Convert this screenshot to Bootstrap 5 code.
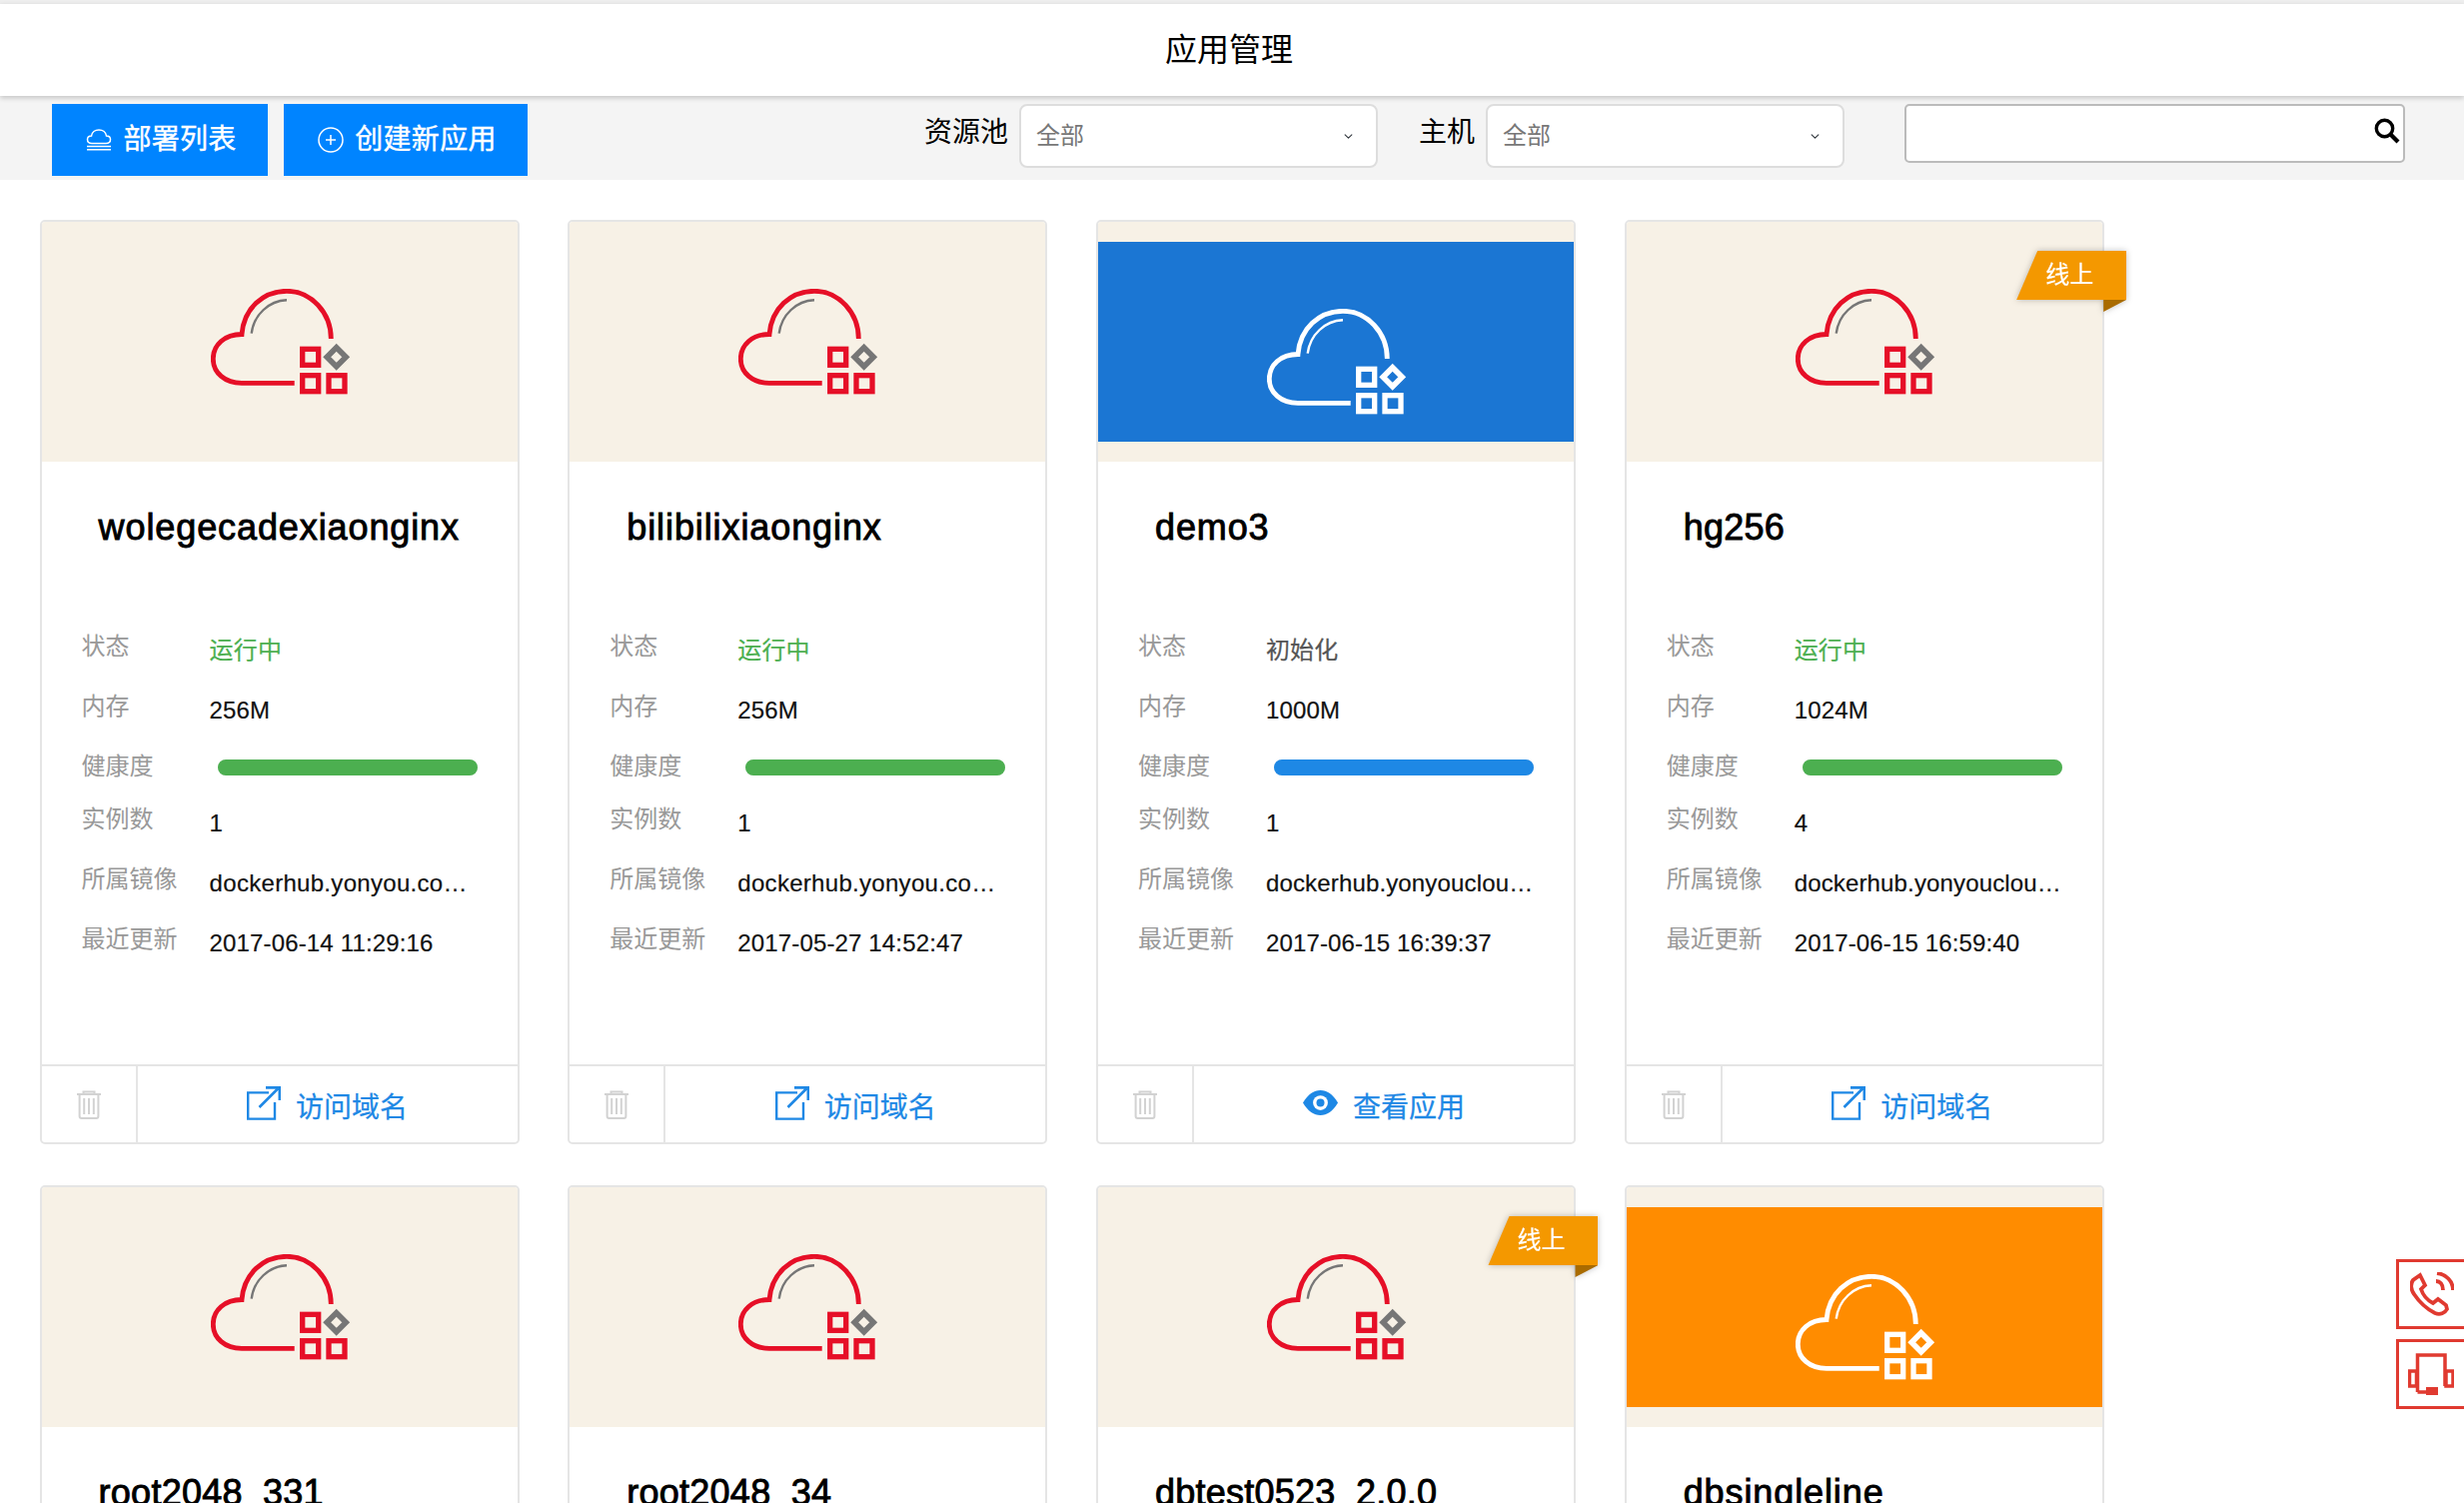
<!DOCTYPE html>
<html lang="zh-CN">
<head>
  <meta charset="UTF-8" />
  <title>应用管理</title>
  <meta name="viewport" content="width=device-width, initial-scale=1" />
  <link href="https://cdn.jsdelivr.net/npm/bootstrap@5.3.0/dist/css/bootstrap.min.css" rel="stylesheet" />
  <style>
    html, body {
      height: 100%;
      overflow: hidden;
    }
    body {
      font-family: "Liberation Sans", "Noto Sans CJK SC", sans-serif;
      background: #fff;
      color: #000;
    }
    .top-strip {
      height: 4px;
      background: #eee;
    }
    .page-head {
      height: 92px;
      padding-right: 6px;
      background: #fff;
      font-size: 32px;
      line-height: 93px;
      position: relative;
      z-index: 2;
      box-shadow: 0 2px 5px rgba(0, 0, 0, .2);
    }
    .tool-bar {
      height: 84px;
      padding: 8px 59px 0 52px;
      background: #f4f4f4;
    }
    .tool-btn {
      height: 72px;
      padding: 0 0 0 3px;
      border: 0;
      border-radius: 0;
      background: #0084ff;
      color: #fff;
      font-size: 28px;
      line-height: 1;
      letter-spacing: .3px;
      -webkit-text-stroke: .4px #fff;
    }
    .tool-btn:hover {
      background: #0074e0;
      color: #fff;
    }
    .tool-btn svg { margin-right: 11px; }
    .btn-list { width: 216px; }
    .btn-new { width: 244px; margin-left: 16px; }
    .tool-label {
      font-size: 28px;
      line-height: 58px;
      margin-right: 11px;
    }
    .tool-select {
      width: 359px;
      height: 64px;
      padding: 0 40px 0 15px;
      font-size: 24px;
      color: #777;
      border: 2px solid #ddd;
      border-radius: 8px;
      background-size: 11px 9px;
      background-position: right 22px center;
      margin-right: 41px;
    }
    .tool-search {
      width: 501px;
      height: 59px;
      margin-left: 19px;
      position: relative;
    }
    .tool-search input {
      height: 59px;
      border: 2px solid #bbb;
      border-radius: 5px;
    }
    .tool-search svg {
      position: absolute;
      top: 14px;
      right: 5px;
    }
    .card-wall {
      padding: 40px 0 0 39.6px;
      column-gap: 48.7px;
      row-gap: 41px;
    }
    .app-card {
      width: 480px;
      height: 925px;
      border: 2px solid #e5e5e5;
      border-radius: 5px;
      background: #fff;
      flex: none;
    }
    .app-pic {
      height: 240px;
      padding: 67px 0 0 169px;
      background: #f7f1e6;
      border-radius: 3px 3px 0 0;
    }
    .pic-red { color: #e60f27; --cloud-two: #767676; }
    .pic-fill { padding: 20px 0; color: #fff; --cloud-two: #fff; }
    .pic-fill > div { height: 200px; padding: 67px 0 0 169px; }
    .fill-blue { background: #1b76d3; }
    .fill-orange { background: #ff8c00; }
    .app-title {
      margin: 41px 0 64px 57px;
      font-size: 36px;
      line-height: 50px;
      font-weight: 400;
      letter-spacing: .9px;
      -webkit-text-stroke: .9px #000;
    }
    .title-num { letter-spacing: .25px; }
    .info-row {
      height: 60px;
      margin-left: 40px;
      font-size: 24px;
    }
    .info-key {
      width: 128px;
      flex: none;
      line-height: 60px;
      color: #999;
    }
    .info-val {
      line-height: 68px;
      color: #111;
      white-space: nowrap;
      letter-spacing: .15px;
      -webkit-text-stroke: .2px currentColor;
    }
    .val-long { letter-spacing: .3px; }
    .val-run { color: #4caf50; }
    .val-init { color: #555; }
    .row-health { height: 52.5px; }
    .health-bar {
      width: 260px;
      height: 16px;
      margin: 23px 0 0 8px;
      border-radius: 8px;
      background: #e9e9e9;
    }
    .bar-green { background: #4caf50; }
    .bar-blue { background: #1e88e5; }
    .app-foot {
      height: 78px;
      padding: 0;
      border-top: 2px solid #e5e5e5;
      border-radius: 0;
      background: #fff;
    }
    .foot-del {
      width: 96px;
      border-right: 2px solid #e5e5e5;
    }
    .foot-link {
      padding-top: 8px;
      color: #1e88e5;
      font-size: 28px;
      line-height: 1;
      text-decoration: none;
      -webkit-text-stroke: .25px currentColor;
    }
    .foot-link svg { margin: -11px 15px 0 0; }
    .ribbon {
      position: absolute;
      top: 29px;
      right: -24.5px;
      width: 110px;
      height: 61px;
      color: #fff;
      font-size: 24px;
      filter: drop-shadow(0 0 3px rgba(0, 0, 0, .25));
    }
    .ribbon-main {
      height: 49px;
      padding-left: 29px;
      line-height: 47px;
      background: #f49800;
      clip-path: polygon(21px 0, 100% 0, 100% 100%, 0 100%);
      -webkit-text-stroke: .2px #fff;
    }
    .ribbon-fold {
      width: 23px;
      height: 12px;
      margin-left: auto;
      background: #a96b00;
      clip-path: polygon(0 0, 100% 0, 0 100%);
    }
    .side-btn {
      position: fixed;
      right: 0;
      width: 68px;
      height: 70px;
      border: 3px solid #e03a30;
      border-right: 0;
      background: #fff;
      z-index: 3;
    }
    .side-phone { top: 1260px; }
    .side-phone svg { margin: 10px 0 0 11px; }
    .side-head { top: 1340px; }
    .side-head svg { margin: 11px 0 0 9px; }
  </style>
</head>
<body>

<svg width="0" height="0" class="position-absolute">
  <symbol id="cloud" viewBox="0 0 140 108">
    <path d="M120.3 50C120.3 24 100.5 2.3 76 2.3 52 2.3 33 20 31 45.5 14 45.5 2.3 56 2.3 70 2.3 84 14 94.3 31 94.3H83.7" fill="none" stroke="currentColor" stroke-width="4.8" />
    <path d="M40.7 44.7C43 26 58 12 76 11.3" fill="none" stroke="var(--cloud-two)" stroke-width="2.4" />
    <g fill="none" stroke="currentColor" stroke-width="5.3">
      <rect x="91.7" y="60.3" width="16" height="16" />
      <rect x="91.7" y="86.7" width="16" height="16" />
      <rect x="118" y="86.7" width="16" height="16" />
    </g>
    <polygon points="125.7,58.8 135.2,68.3 125.7,77.8 116.2,68.3" fill="none" stroke="var(--cloud-two)" stroke-width="5.6" />
  </symbol>
  <symbol id="trash" viewBox="0 0 24 29">
    <g fill="none" stroke="#d2d2d2" stroke-width="2">
      <path d="M0 4H24M6.5 4V1.5H17.5V4M2.6 4V26Q2.6 28 4.6 28H19.4Q21.4 28 21.4 26V4" />
      <path d="M7.2 8V24M12 8V24M16.8 8V24" />
    </g>
  </symbol>
  <symbol id="outlink" viewBox="0 0 34 34">
    <path d="M22 6.4H1.2V32.6H28V16" fill="none" stroke="#1e88e5" stroke-width="2.4" />
    <path d="M12.5 21L31.5 2M19 1.4H32.8V14" fill="none" stroke="#1e88e5" stroke-width="2.6" />
  </symbol>
  <symbol id="eye" viewBox="0 0 35 25">
    <path d="M0 12.5C5 4 11 0 17.5 0 24 0 30 4 35 12.5 30 21 24 25 17.5 25 11 25 5 21 0 12.5Z" fill="#1e88e5" />
    <circle cx="17.5" cy="12.6" r="7.4" fill="#fff" />
    <circle cx="17.5" cy="12.6" r="4" fill="#1e88e5" />
  </symbol>
</svg>

<div class="top-strip"></div>
<div class="page-head text-center">应用管理</div>

<div class="tool-bar d-flex align-items-start">
  <button class="btn tool-btn btn-list d-flex align-items-center justify-content-center" type="button">
    <svg width="26" height="22" viewBox="0 0 26 22" fill="none" stroke="#fff" stroke-width="1.5">
      <path d="M6 14.5C2.5 14.5 1.5 12.5 1.5 10.5 1.5 8.5 3 7 5.5 7 6 3.5 9 1 13 1 17 1 20 3.5 20.5 7 23 7 24.5 8.5 24.5 10.5 24.5 12.5 23.5 14.5 20 14.5Z" />
      <path d="M1 17.5H25M1 20.8H25" />
    </svg>
    部署列表
  </button>
  <button class="btn tool-btn btn-new d-flex align-items-center justify-content-center" type="button">
    <svg width="26" height="26" viewBox="0 0 26 26" fill="none" stroke="#fff" stroke-width="1.5">
      <circle cx="13" cy="13" r="12" />
      <path d="M13 8V18M8 13H18" />
    </svg>
    创建新应用
  </button>
  <div class="ms-auto d-flex align-items-start">
    <span class="tool-label">资源池</span>
    <select class="form-select tool-select"><option>全部</option></select>
    <span class="tool-label">主机</span>
    <select class="form-select tool-select"><option>全部</option></select>
    <div class="tool-search">
      <input class="form-control" type="text" />
      <svg width="26" height="26" viewBox="0 0 26 26" fill="none" stroke="#000" stroke-width="3.4">
        <circle cx="10.5" cy="10.5" r="8.2" />
        <path d="M16.5 16.5L24 24" stroke-width="4.2" />
      </svg>
    </div>
  </div>
</div>

<div class="card-wall d-flex flex-wrap">

  <div class="card app-card">
    <div class="app-pic pic-red"><svg width="140" height="108"><use href="#cloud" /></svg></div>
    <div class="app-title">wolegecadexiaonginx</div>
    <div class="info-row d-flex"><div class="info-key">状态</div><div class="info-val val-run">运行中</div></div>
    <div class="info-row d-flex"><div class="info-key">内存</div><div class="info-val">256M</div></div>
    <div class="info-row row-health d-flex"><div class="info-key">健康度</div><div class="progress health-bar"><div class="progress-bar bar-green" style="width: 100%"></div></div></div>
    <div class="info-row d-flex"><div class="info-key">实例数</div><div class="info-val">1</div></div>
    <div class="info-row d-flex"><div class="info-key">所属镜像</div><div class="info-val val-long">dockerhub.yonyou.co…</div></div>
    <div class="info-row d-flex"><div class="info-key">最近更新</div><div class="info-val">2017-06-14 11:29:16</div></div>
    <div class="card-footer app-foot d-flex mt-auto">
      <div class="foot-del d-flex align-items-center justify-content-center"><svg width="24" height="29"><use href="#trash" /></svg></div>
      <a class="foot-link flex-grow-1 d-flex align-items-center justify-content-center" href="#"><svg width="34" height="34"><use href="#outlink" /></svg>访问域名</a>
    </div>
  </div>

  <div class="card app-card">
    <div class="app-pic pic-red"><svg width="140" height="108"><use href="#cloud" /></svg></div>
    <div class="app-title">bilibilixiaonginx</div>
    <div class="info-row d-flex"><div class="info-key">状态</div><div class="info-val val-run">运行中</div></div>
    <div class="info-row d-flex"><div class="info-key">内存</div><div class="info-val">256M</div></div>
    <div class="info-row row-health d-flex"><div class="info-key">健康度</div><div class="progress health-bar"><div class="progress-bar bar-green" style="width: 100%"></div></div></div>
    <div class="info-row d-flex"><div class="info-key">实例数</div><div class="info-val">1</div></div>
    <div class="info-row d-flex"><div class="info-key">所属镜像</div><div class="info-val val-long">dockerhub.yonyou.co…</div></div>
    <div class="info-row d-flex"><div class="info-key">最近更新</div><div class="info-val">2017-05-27 14:52:47</div></div>
    <div class="card-footer app-foot d-flex mt-auto">
      <div class="foot-del d-flex align-items-center justify-content-center"><svg width="24" height="29"><use href="#trash" /></svg></div>
      <a class="foot-link flex-grow-1 d-flex align-items-center justify-content-center" href="#"><svg width="34" height="34"><use href="#outlink" /></svg>访问域名</a>
    </div>
  </div>

  <div class="card app-card">
    <div class="app-pic pic-fill"><div class="fill-blue"><svg width="140" height="108"><use href="#cloud" /></svg></div></div>
    <div class="app-title">demo3</div>
    <div class="info-row d-flex"><div class="info-key">状态</div><div class="info-val val-init">初始化</div></div>
    <div class="info-row d-flex"><div class="info-key">内存</div><div class="info-val">1000M</div></div>
    <div class="info-row row-health d-flex"><div class="info-key">健康度</div><div class="progress health-bar"><div class="progress-bar bar-blue" style="width: 100%"></div></div></div>
    <div class="info-row d-flex"><div class="info-key">实例数</div><div class="info-val">1</div></div>
    <div class="info-row d-flex"><div class="info-key">所属镜像</div><div class="info-val">dockerhub.yonyouclou…</div></div>
    <div class="info-row d-flex"><div class="info-key">最近更新</div><div class="info-val">2017-06-15 16:39:37</div></div>
    <div class="card-footer app-foot d-flex mt-auto">
      <div class="foot-del d-flex align-items-center justify-content-center"><svg width="24" height="29"><use href="#trash" /></svg></div>
      <a class="foot-link flex-grow-1 d-flex align-items-center justify-content-center" href="#"><svg width="35" height="25"><use href="#eye" /></svg>查看应用</a>
    </div>
  </div>

  <div class="card app-card">
    <div class="ribbon"><div class="ribbon-main">线上</div><div class="ribbon-fold"></div></div>
    <div class="app-pic pic-red"><svg width="140" height="108"><use href="#cloud" /></svg></div>
    <div class="app-title title-num">hg256</div>
    <div class="info-row d-flex"><div class="info-key">状态</div><div class="info-val val-run">运行中</div></div>
    <div class="info-row d-flex"><div class="info-key">内存</div><div class="info-val">1024M</div></div>
    <div class="info-row row-health d-flex"><div class="info-key">健康度</div><div class="progress health-bar"><div class="progress-bar bar-green" style="width: 100%"></div></div></div>
    <div class="info-row d-flex"><div class="info-key">实例数</div><div class="info-val">4</div></div>
    <div class="info-row d-flex"><div class="info-key">所属镜像</div><div class="info-val">dockerhub.yonyouclou…</div></div>
    <div class="info-row d-flex"><div class="info-key">最近更新</div><div class="info-val">2017-06-15 16:59:40</div></div>
    <div class="card-footer app-foot d-flex mt-auto">
      <div class="foot-del d-flex align-items-center justify-content-center"><svg width="24" height="29"><use href="#trash" /></svg></div>
      <a class="foot-link flex-grow-1 d-flex align-items-center justify-content-center" href="#"><svg width="34" height="34"><use href="#outlink" /></svg>访问域名</a>
    </div>
  </div>

  <div class="card app-card">
    <div class="app-pic pic-red"><svg width="140" height="108"><use href="#cloud" /></svg></div>
    <div class="app-title title-num">root2048_331</div>
  </div>

  <div class="card app-card">
    <div class="app-pic pic-red"><svg width="140" height="108"><use href="#cloud" /></svg></div>
    <div class="app-title title-num">root2048_34</div>
  </div>

  <div class="card app-card">
    <div class="ribbon"><div class="ribbon-main">线上</div><div class="ribbon-fold"></div></div>
    <div class="app-pic pic-red"><svg width="140" height="108"><use href="#cloud" /></svg></div>
    <div class="app-title title-num">dbtest0523_2.0.0</div>
  </div>

  <div class="card app-card">
    <div class="app-pic pic-fill"><div class="fill-orange"><svg width="140" height="108"><use href="#cloud" /></svg></div></div>
    <div class="app-title">dbsingleline</div>
  </div>

</div>

<div class="side-btn side-phone">
  <svg width="44" height="44" viewBox="0 0 44 44" fill="none" stroke="#e03a30" stroke-width="3.8">
    <path d="M10 3L3 8C0 12 1 18 4 22 10 31 17 37 25 41 30 43 35 41 37 37L36 33 28 27 23 31C17 28 13 23 11 17L15 13Z" />
    <path d="M26 9C30 9 33 12 33 18M27 1C36 2 43 9 43 18" />
  </svg>
</div>
<div class="side-btn side-head">
  <svg width="46" height="42" viewBox="0 0 46 42" fill="none" stroke="#e03a30" stroke-width="3.5">
    <path d="M9.5 39V2H37V33M9.5 39H18" />
    <rect x="1.5" y="18" width="7" height="15" />
    <rect x="38" y="18" width="7" height="15" />
    <rect x="18" y="34" width="12" height="8" fill="#e03a30" stroke="none" />
  </svg>
</div>

<script src="https://cdn.jsdelivr.net/npm/bootstrap@5.3.0/dist/js/bootstrap.bundle.min.js"></script>
</body>
</html>
